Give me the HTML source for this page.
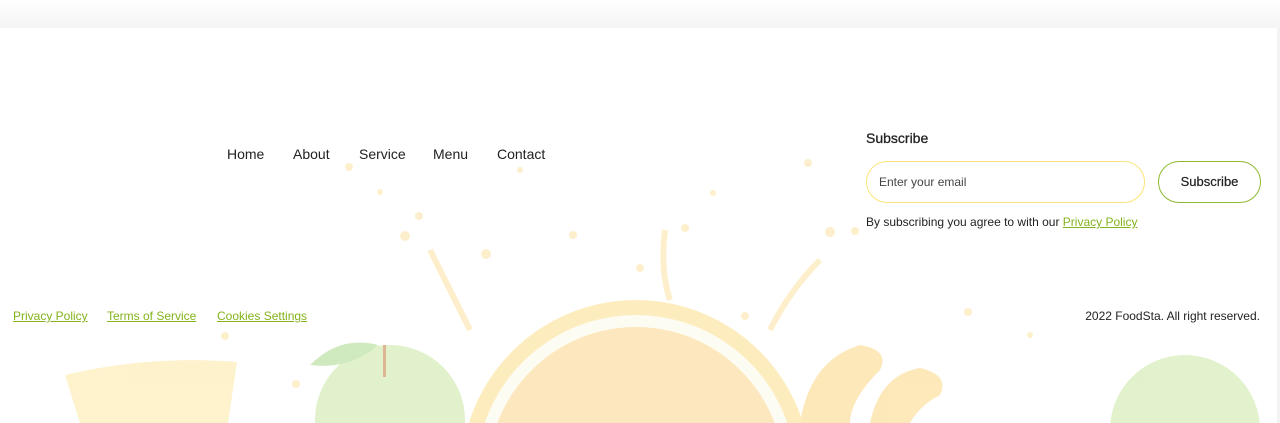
<!DOCTYPE html>
<html><head><style>
html,body{margin:0;width:1280px;height:423px;overflow:hidden}
body{background:#fff;font-family:"Liberation Sans",sans-serif;position:relative;color:#222}
.top{position:absolute;left:0;top:0;width:1280px;height:28px;background:linear-gradient(#fff,#f4f4f4)}
.rs{position:absolute;right:0;top:28px;width:3px;height:395px;background:#f3f3f3}
.nav{position:absolute;top:146px;font-size:14px;color:#222}
.a{position:absolute;font-size:12px;color:#84b31c;text-decoration:underline}
</style></head><body>
<div class="top"></div><div class="rs"></div>
<svg style="position:absolute;left:0;top:0" width="1280" height="423">
<g opacity="0.55">
<path d="M65 375 Q150 355 237 362 L228 423 L80 423 Z" fill="#fde9a3"/>
<circle cx="390" cy="420" r="75" fill="#c9e7a3"/>
<path d="M310 365 Q340 335 378 345 Q350 370 310 365Z" fill="#a9d98c"/>
<rect x="383" y="345" width="3" height="32" fill="#c87a3a"/>
<circle cx="636" cy="475" r="175" fill="#fde08a"/>
<circle cx="636" cy="475" r="160" fill="#fcfbe8"/>
<circle cx="636" cy="475" r="148" fill="#fdd58a"/>
<path d="M800 423 Q810 360 860 345 Q890 350 880 370 Q850 400 850 423Z" fill="#fcd780"/>
<path d="M870 423 Q880 375 920 368 Q950 375 940 395 Q920 405 910 423Z" fill="#fcd780"/>
<circle cx="1185" cy="430" r="75" fill="#c9e7a3"/>
<g fill="#fde3a3">
<circle cx="349" cy="167" r="4"/><circle cx="380" cy="192" r="3"/><circle cx="419" cy="216" r="4"/><circle cx="405" cy="236" r="5"/><circle cx="486" cy="254" r="5"/><circle cx="520" cy="170" r="3"/><circle cx="573" cy="235" r="4"/><circle cx="640" cy="268" r="4"/><circle cx="685" cy="228" r="4"/><circle cx="713" cy="193" r="3"/><circle cx="808" cy="163" r="4"/><circle cx="830" cy="232" r="5"/><circle cx="855" cy="231" r="4"/><circle cx="745" cy="316" r="4"/><circle cx="968" cy="312" r="4"/><circle cx="225" cy="336" r="4"/><circle cx="296" cy="384" r="4"/><circle cx="1030" cy="335" r="3"/>
</g>
<path d="M430 250 Q450 290 470 330 M665 230 Q660 270 670 300 M820 260 Q790 290 770 330" stroke="#fde3a3" stroke-width="6" fill="none"/>
</g>
</svg>
<div class="nav" style="left:227px">Home</div>
<div class="nav" style="left:293px">About</div>
<div class="nav" style="left:359px">Service</div>
<div class="nav" style="left:433px">Menu</div>
<div class="nav" style="left:497px">Contact</div>
<div style="position:absolute;left:866px;top:130px;font-size:14px;color:#222;-webkit-text-stroke:0.3px #222">Subscribe</div>
<div style="position:absolute;left:866px;top:161px;width:277px;height:40px;border:1px solid #fbe57a;border-radius:21px;background:#fff"><span style="position:absolute;left:12px;top:13px;font-size:12px;color:#444">Enter your email</span></div>
<div style="position:absolute;left:1158px;top:161px;width:101px;height:40px;border:1px solid #8dba2e;border-radius:21px;text-align:center;line-height:40px;font-size:13px;color:#222;background:#fff;-webkit-text-stroke:0.2px #222">Subscribe</div>
<div style="position:absolute;left:866px;top:215px;font-size:12px;color:#222">By subscribing you agree to with our <span style="color:#84b31c;text-decoration:underline">Privacy Policy</span></div>
<div class="a" style="left:13px;top:309px">Privacy Policy</div>
<div class="a" style="left:107px;top:309px">Terms of Service</div>
<div class="a" style="left:217px;top:309px">Cookies Settings</div>
<div style="position:absolute;right:20px;top:309px;font-size:12px;color:#222">2022 FoodSta. All right reserved.</div>
</body></html>
